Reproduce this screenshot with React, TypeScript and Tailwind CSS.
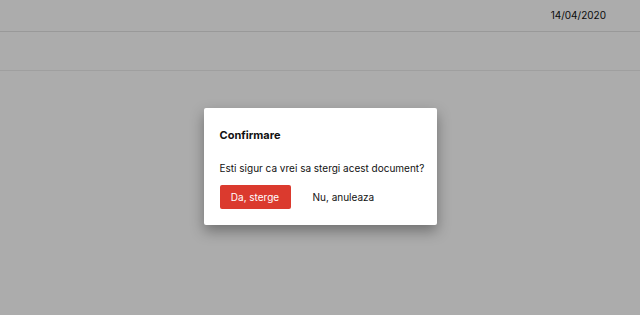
import React from "react";

export default function App() {
  return (
    <div className="relative w-[640px] h-[315px] overflow-hidden bg-white" style={{ fontFamily: "Inter, 'Noto Sans', sans-serif" }}>
      <div className="h-[32px] border-b border-[#e3e3e3] flex items-center justify-end pr-[34px]">
        <span className="text-[10px] text-[#111] pb-[1px]">14/04/2020</span>
      </div>
      <div className="h-[39px] border-b border-[#ececec]" />
      <div className="absolute inset-0 bg-[rgba(0,0,0,0.325)] flex justify-center pt-[108px]">
        <div className="w-[233px] h-[117px] bg-white rounded-[2px] shadow-[0_6px_14px_rgba(0,0,0,0.35)] px-[16px] pt-[20px]">
          <div className="text-[11px] font-bold text-[#111] leading-[14px]">Confirmare</div>
          <div className="mt-[19px] text-[10px] text-[#111] leading-[14px] whitespace-nowrap">Esti sigur ca vrei sa stergi acest document?</div>
          <div className="mt-[10px] flex items-center">
            <button className="w-[71px] h-[24px] bg-[#db3a2e] rounded-[2px] text-white text-[10px]">Da, sterge</button>
            <button className="ml-[22px] text-[10px] text-[#111]">Nu, anuleaza</button>
          </div>
        </div>
      </div>
    </div>
  );
}
